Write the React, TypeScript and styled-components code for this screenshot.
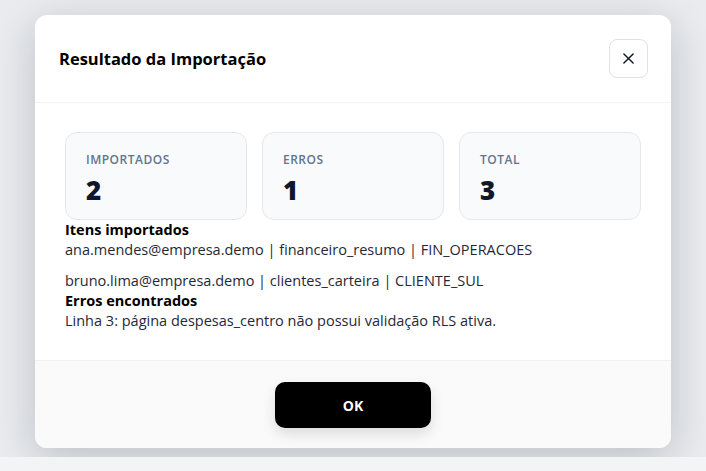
import styled, { createGlobalStyle } from "styled-components";

const GlobalStyle = createGlobalStyle`
  html, body {
    margin: 0;
    padding: 0;
    background: #f3f4f6;
    font-family: "Open Sans", "Noto Sans", sans-serif;
    color: #111827;
  }
`;

const S = {
  Overlay: styled.div`
    background: #e9ebee;
    padding: 15px 35px 9px;
    overflow: hidden;
  `,
  Modal: styled.section`
    background: #ffffff;
    border-radius: 12px;
    overflow: hidden;
    box-shadow: 0 10px 40px rgba(15, 23, 42, 0.2);
  `,
  Header: styled.header`
    display: flex;
    align-items: center;
    justify-content: space-between;
    padding: 24px 23px 24px 24px;
    border-bottom: 1px solid #f1f2f4;
  `,
  Title: styled.h2`
    margin: 0;
    font-size: 16.5px;
    font-weight: 700;
    color: #000000;
  `,
  Close: styled.button`
    width: 39px;
    height: 39px;
    display: flex;
    align-items: center;
    justify-content: center;
    border: 1px solid #dfe1e5;
    border-radius: 8px;
    background: #ffffff;
    padding: 0;
    cursor: pointer;
  `,
  Body: styled.div`
    padding: 29px 30px 29px;
  `,
  Stats: styled.div`
    display: grid;
    grid-template-columns: repeat(3, 1fr);
    gap: 15px;
  `,
  Stat: styled.div`
    height: 88px;
    box-sizing: border-box;
    padding: 18px 20px;
    background: #f8fafc;
    border: 1px solid #e5e7eb;
    border-radius: 12px;
  `,
  StatLabel: styled.div`
    font-size: 12px;
    font-weight: 600;
    letter-spacing: 0.5px;
    color: #64748b;
    line-height: 18px;
  `,
  StatValue: styled.div`
    margin-top: 6px;
    font-size: 26px;
    font-weight: 800;
    line-height: 30px;
    color: #0f172a;
  `,
  SectionTitle: styled.div`
    font-size: 14.5px;
    font-weight: 700;
    line-height: 20px;
    color: #000000;
  `,
  List: styled.div`
    display: flex;
    flex-direction: column;
    gap: 11px;
  `,
  Item: styled.div`
    font-size: 14.5px;
    line-height: 20px;
    color: #1f2937;
  `,
  Footer: styled.footer`
    display: flex;
    justify-content: center;
    padding: 21px 20px 20px;
    background: #fafafa;
    border-top: 1px solid #f0f0f0;
  `,
  Ok: styled.button`
    width: 156px;
    height: 46px;
    border: none;
    border-radius: 10px;
    background: #000000;
    color: #ffffff;
    font-family: inherit;
    font-size: 14px;
    font-weight: 700;
    box-shadow: 0 6px 14px rgba(0, 0, 0, 0.12);
    cursor: pointer;
  `,
};

const stats = [
  { label: "IMPORTADOS", value: 2 },
  { label: "ERROS", value: 1 },
  { label: "TOTAL", value: 3 },
];

const imported = [
  "ana.mendes@empresa.demo | financeiro_resumo | FIN_OPERACOES",
  "bruno.lima@empresa.demo | clientes_carteira | CLIENTE_SUL",
];

const errors = ["Linha 3: página despesas_centro não possui validação RLS ativa."];

export default function App() {
  return (
    <>
      <GlobalStyle />
      <S.Overlay>
        <S.Modal>
          <S.Header>
            <S.Title>Resultado da Importação</S.Title>
            <S.Close aria-label="Fechar">
              <svg width="11" height="11" viewBox="0 0 12 12">
                <path d="M1 1L11 11M11 1L1 11" stroke="#111827" strokeWidth="1.6" strokeLinecap="round" />
              </svg>
            </S.Close>
          </S.Header>
          <S.Body>
            <S.Stats>
              {stats.map((s) => (
                <S.Stat key={s.label}>
                  <S.StatLabel>{s.label}</S.StatLabel>
                  <S.StatValue>{s.value}</S.StatValue>
                </S.Stat>
              ))}
            </S.Stats>
            <S.SectionTitle>Itens importados</S.SectionTitle>
            <S.List>
              {imported.map((line) => (
                <S.Item key={line}>{line}</S.Item>
              ))}
            </S.List>
            <S.SectionTitle>Erros encontrados</S.SectionTitle>
            <S.List>
              {errors.map((line) => (
                <S.Item key={line}>{line}</S.Item>
              ))}
            </S.List>
          </S.Body>
          <S.Footer>
            <S.Ok>OK</S.Ok>
          </S.Footer>
        </S.Modal>
      </S.Overlay>
    </>
  );
}
